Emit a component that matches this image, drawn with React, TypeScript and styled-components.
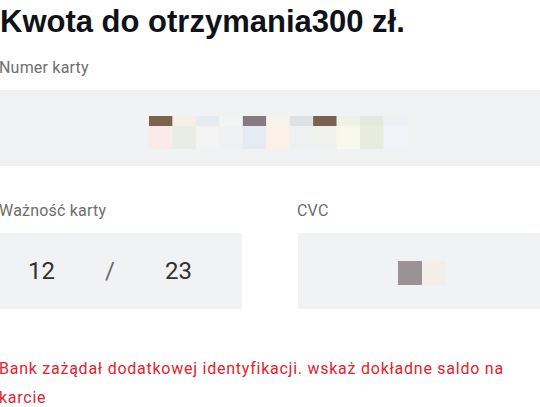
import React from 'react';
import styled, { createGlobalStyle } from 'styled-components';

const GlobalStyle = createGlobalStyle`
  html, body {
    margin: 0;
    padding: 0;
    background: #fff;
  }
  body {
    font-family: Roboto, "Liberation Sans", Arial, sans-serif;
    overflow: hidden;
  }
`;

const Page = styled.div`
  width: 540px;
  display: flex;
  flex-direction: column;
`;

const Title = styled.h1`
  margin: 5px 0 0 0;
  font-family: "Liberation Sans", Arial, sans-serif;
  font-size: 31px;
  line-height: 34px;
  font-weight: 700;
  color: #0f1317;
`;

const Label = styled.div<{ $top: number }>`
  margin-top: ${(p) => p.$top}px;
  margin-left: -1px;
  font-size: 16px;
  line-height: 19px;
  letter-spacing: 0.2px;
  color: #6e6e6e;
`;

const Field = styled.div<{ $top?: number }>`
  margin-top: ${(p) => p.$top ?? 13}px;
  height: 76px;
  background: #f1f2f4;
  box-sizing: border-box;
`;

const CardField = styled(Field)`
  display: flex;
  align-items: flex-start;
  padding: 26px 0 0 149px;
`;

const Row = styled.div`
  display: grid;
  grid-template-columns: 242px 1fr;
  column-gap: 56px;
  margin-top: 35px;
`;

const Column = styled.div`
  display: flex;
  flex-direction: column;
`;

const ExpiryField = styled(Field)`
  display: grid;
  grid-template-columns: 83px 54px 83px;
  align-items: center;
  font-size: 24px;
  color: #303030;
`;

const Part = styled.span<{ $light?: boolean }>`
  text-align: center;
  color: ${(p) => (p.$light ? '#6a6a6a' : '#303030')};
`;

const CvcField = styled(Field)`
  display: flex;
  align-items: flex-start;
  padding: 28px 0 0 100px;
`;

const ErrorText = styled.p`
  margin: 45px 0 0 -1px;
  font-size: 16px;
  line-height: 29px;
  letter-spacing: 0.75px;
  color: #e3222c;
  width: 510px;
`;

const cardRows = [
  ['#7e6250', '#f5efe6', '#e6ecf0', '#f3f4f4', '#857b80', '#f6f2ee', '#dde1e2', '#7a6252', '#eff1e4', '#e5eadc', '#eef1f5'],
  ['#fbeaea', '#eaece6', '#f3f3f1', '#eff1f2', '#e6eaf3', '#fbf1e8', '#eef1f0', '#f0f1ef', '#f7f7ea', '#e7ecdc', '#f0f3f7'],
];

function CardMosaic() {
  const w = 23.45;
  return (
    <svg width={260} height={33} viewBox="0 0 260 33">
      {cardRows[0].map((c, i) => (
        <rect key={'a' + i} x={i * w} y={0} width={w + 0.3} height={10} fill={c} />
      ))}
      {cardRows[1].map((c, i) => (
        <rect key={'b' + i} x={i * w} y={10} width={w + 0.3} height={23} fill={c} />
      ))}
    </svg>
  );
}

function CvcMosaic() {
  return (
    <svg width={48} height={24} viewBox="0 0 48 24">
      <rect x={0} y={0} width={24} height={24} fill="#9b9296" />
      <rect x={24} y={0} width={24} height={24} fill="#f4eeea" />
    </svg>
  );
}

export default function App() {
  return (
    <>
      <GlobalStyle />
      <Page>
        <Title>Kwota do otrzymania300 zł.</Title>
        <Label $top={19}>Numer karty</Label>
        <CardField>
          <CardMosaic />
        </CardField>
        <Row>
          <Column>
            <Label $top={0}>Ważność karty</Label>
            <ExpiryField>
              <Part>12</Part>
              <Part $light>/</Part>
              <Part>23</Part>
            </ExpiryField>
          </Column>
          <Column>
            <Label $top={0}>CVC</Label>
            <CvcField>
              <CvcMosaic />
            </CvcField>
          </Column>
        </Row>
        <ErrorText>Bank zażądał dodatkowej identyfikacji. wskaż dokładne saldo na karcie</ErrorText>
      </Page>
    </>
  );
}
